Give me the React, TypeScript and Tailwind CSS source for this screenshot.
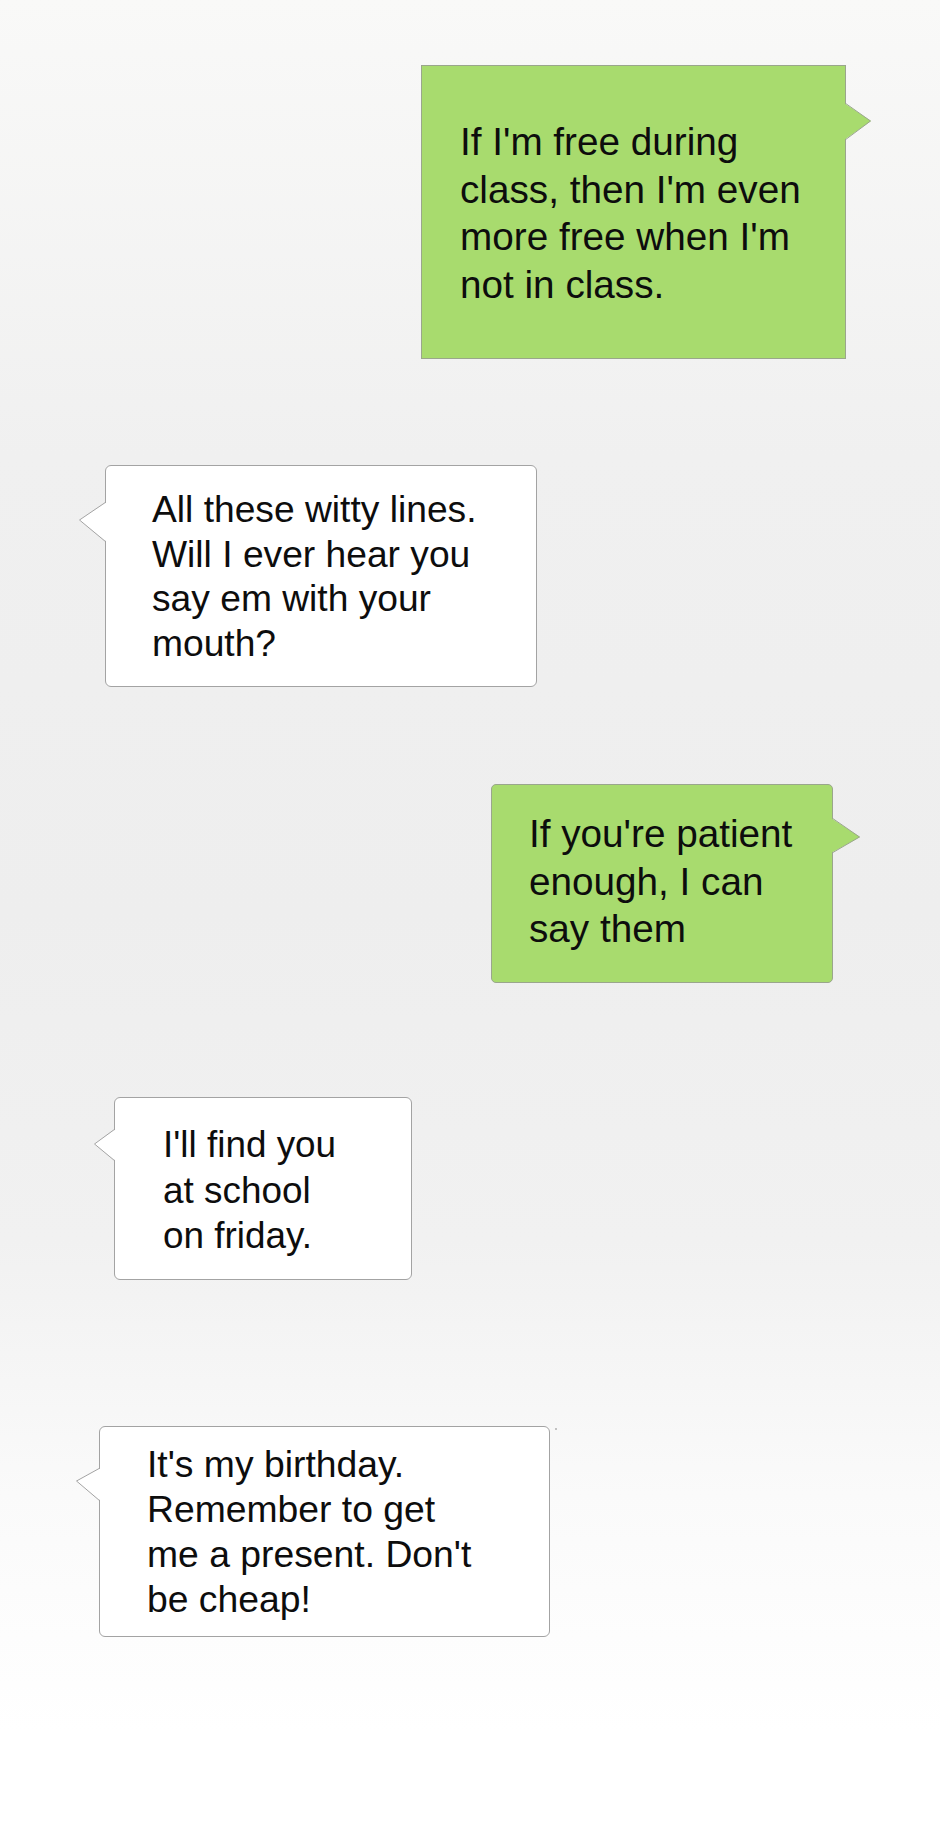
import React from 'react';

type Side = 'left' | 'right';

type Tail = { top: number; tip: number; bottom: number; w: number };

const Pointer: React.FC<{ side: Side; tail: Tail; fill: string; stroke: string }> = ({ side, tail, fill, stroke }) => {
  const h = tail.bottom - tail.top;
  const w = tail.w + 2;
  // drawn so the base sits 2px inside the bubble and hides the border there
  const pts =
    side === 'left'
      ? `${w},0 0,${tail.tip - tail.top} ${w},${h}`
      : `0,0 ${tail.w},${tail.tip - tail.top} 0,${h}`;
  const edge =
    side === 'left'
      ? `${tail.w + 1},0 0.5,${tail.tip - tail.top} ${tail.w + 1},${h}`
      : `1,0 ${tail.w - 0.5},${tail.tip - tail.top} 1,${h}`;
  return (
    <svg
      width={w}
      height={h}
      className="absolute"
      style={side === 'left' ? { left: -tail.w - 1, top: tail.top - 1 } : { right: -tail.w - 1, top: tail.top - 1 }}
    >
      <polygon points={pts} fill={fill} />
      <polyline points={edge} fill="none" stroke={stroke} strokeWidth={1} />
    </svg>
  );
};

type Msg = {
  lines: string[];
  side: Side;
  box: string;
  text: string;
  tail: Tail;
  dot?: boolean;
};

const messages: Msg[] = [
  {
    lines: ["If I'm free during", "class, then I'm even", "more free when I'm", 'not in class.'],
    side: 'right',
    box: 'mt-[65px] ml-[421px] w-[425px] h-[294px] pt-[52px] pl-[38px]',
    text: 'text-[38.7px] leading-[47.5px]',
    tail: { top: 38, tip: 56, bottom: 75, w: 27 },
  },
  {
    lines: ['All these witty lines.', 'Will I ever hear you', 'say em with your', 'mouth?'],
    side: 'left',
    box: 'mt-[106px] ml-[105px] w-[432px] h-[222px] pt-[21px] pl-[46px] rounded-[6px]',
    text: 'text-[37.2px] leading-[44.5px]',
    tail: { top: 37, tip: 55, bottom: 77, w: 26 },
  },
  {
    lines: ["If you're patient", 'enough, I can', 'say them'],
    side: 'right',
    box: 'mt-[97px] ml-[491px] w-[342px] h-[199px] pt-[25px] pl-[37px] rounded-[5px]',
    text: 'text-[38.7px] leading-[47.5px]',
    tail: { top: 34, tip: 53, bottom: 69, w: 29 },
  },
  {
    lines: ["I'll find you", 'at school', 'on friday.'],
    side: 'left',
    box: 'mt-[114px] ml-[114px] w-[298px] h-[183px] pt-[24px] pl-[48px] rounded-[6px]',
    text: 'text-[36.9px] leading-[45.5px]',
    tail: { top: 32, tip: 47, bottom: 64, w: 20 },
  },
  {
    lines: ["It's my birthday.", 'Remember to get', "me a present. Don't", 'be cheap!'],
    side: 'left',
    box: 'mt-[146px] ml-[99px] w-[451px] h-[211px] pt-[15px] pl-[47px] rounded-[6px]',
    text: 'text-[37.3px] leading-[45px]',
    tail: { top: 42, tip: 55, bottom: 75, w: 23 },
    dot: true,
  },
];

const Bubble: React.FC<{ m: Msg }> = ({ m }) => {
  const green = m.side === 'right';
  const fill = green ? '#a8db6e' : '#ffffff';
  const stroke = green ? '#9aa68c' : '#a3a3a3';
  return (
    <div
      className={`relative shrink-0 border ${m.box} ${
        green ? 'bg-[#a8db6e] border-[#9aa68c]' : 'bg-white border-[#a3a3a3]'
      }`}
    >
      <Pointer side={m.side} tail={m.tail} fill={fill} stroke={stroke} />
      <div className={`text-[#0d0d0d] whitespace-nowrap ${m.text}`}>
        {m.lines.map((l, i) => (
          <div key={i}>{l}</div>
        ))}
      </div>
      {m.dot && <span className="absolute top-[1px] -right-[8px] w-[2px] h-[2px] rounded-full bg-[#b0b0b0]" />}
    </div>
  );
};

export default function App() {
  return (
    <div className="w-[940px] min-h-[1823px] flex flex-col items-start font-['Liberation_Sans',Arial,sans-serif] bg-[linear-gradient(180deg,#f9f9f8_0%,#f0f0f0_25%,#eeeeee_50%,#f1f1f1_68%,#fafafa_82%,#ffffff_95%)]">
      {messages.map((m, i) => (
        <Bubble key={i} m={m} />
      ))}
    </div>
  );
}
